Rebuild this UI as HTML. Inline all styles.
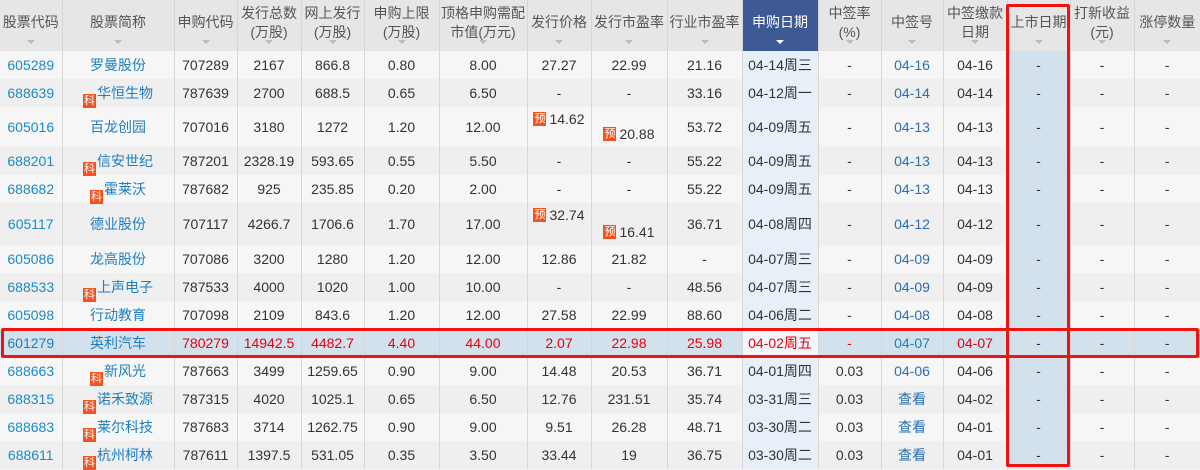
<!DOCTYPE html>
<html><head><meta charset="utf-8"><style>
body{margin:0;width:1200px;height:469px;overflow:hidden;background:#f5f5f5;font-family:"Liberation Sans","Noto Sans CJK SC",sans-serif;font-size:14px;color:#333;position:relative}
table{border-collapse:collapse;table-layout:fixed;width:1200px}
td,th{padding:0;text-align:center;border-left:1px solid #d6d6d6;white-space:nowrap;overflow:visible;line-height:16px}
th{background:#e6e6e6;font-weight:normal;color:#555;height:51px;line-height:19px;position:relative;vertical-align:middle;padding-bottom:6px;box-sizing:border-box}
th:after{content:"";position:absolute;left:50%;margin-left:-4px;bottom:7px;border:4px solid transparent;border-top:4px solid #bbb;border-bottom:0}
th.s{background:#3d5a95;color:#fff}
th.s:after{border-top-color:#fff}
tr{height:28px}
tr.odd td{background:#f6f6f6}
tr.even td{background:#efefef}
td.c{color:#1a8bc6}
td.n{color:#1c7fc1}
td.b{color:#2a6fb5}
td.d{background:#e7f0f9!important}
td.m{background:#d3e1ec!important}
tr.hl td{background:#d3e1ec!important;color:#e8000c}
tr.hl td.c,tr.hl td.n,tr.hl td.b{color:#1c7fc1}
.k{display:inline-block;width:13px;height:14px;line-height:14px;background:#f2531c;color:#fff;font-size:11px;vertical-align:middle;position:relative;top:7px;margin-right:1px}
.y{display:inline-block;width:13px;height:14px;line-height:14px;background:#f2531c;color:#fff;font-size:11px;margin-right:3px;vertical-align:middle;position:relative;top:-1px}
.box{position:absolute;border:3px solid #f0120f;box-sizing:border-box;border-radius:2px}
</style></head><body>
<table>
<colgroup><col style="width:62px"><col style="width:112px"><col style="width:63px"><col style="width:64px"><col style="width:63px"><col style="width:75px"><col style="width:88px"><col style="width:64px"><col style="width:76px"><col style="width:75px"><col style="width:76px"><col style="width:63px"><col style="width:62px"><col style="width:64px"><col style="width:63px"><col style="width:64px"><col style="width:66px"></colgroup>
<tr><th style="border-left:0">股票代码</th><th>股票简称</th><th>申购代码</th><th>发行总数<br>(万股)</th><th>网上发行<br>(万股)</th><th>申购上限<br>(万股)</th><th>顶格申购需配<br>市值(万元)</th><th>发行价格</th><th>发行市盈率</th><th>行业市盈率</th><th class="s">申购日期</th><th>中签率<br>(%)</th><th>中签号</th><th>中签缴款<br>日期</th><th>上市日期</th><th>打新收益<br>(元)</th><th>涨停数量</th></tr>
<tr class="odd"><td class="c" style="border-left:0">605289</td><td class="n">罗曼股份</td><td>707289</td><td>2167</td><td>866.8</td><td>0.80</td><td>8.00</td><td>27.27</td><td>22.99</td><td>21.16</td><td class="d">04-14周三</td><td>-</td><td class="b">04-16</td><td>04-16</td><td class="m">-</td><td>-</td><td>-</td></tr>
<tr class="even"><td class="c" style="border-left:0">688639</td><td class="n"><span class="k">科</span>华恒生物</td><td>787639</td><td>2700</td><td>688.5</td><td>0.65</td><td>6.50</td><td>-</td><td>-</td><td>33.16</td><td class="d">04-12周一</td><td>-</td><td class="b">04-14</td><td>04-14</td><td class="m">-</td><td>-</td><td>-</td></tr>
<tr class="odd" style="height:40px"><td class="c" style="border-left:0">605016</td><td class="n">百龙创园</td><td>707016</td><td>3180</td><td>1272</td><td>1.20</td><td>12.00</td><td style="vertical-align:top;padding-top:4px"><span class="y">预</span>14.62</td><td style="vertical-align:bottom;padding-bottom:5px"><span class="y">预</span>20.88</td><td>53.72</td><td class="d">04-09周五</td><td>-</td><td class="b">04-13</td><td>04-13</td><td class="m">-</td><td>-</td><td>-</td></tr>
<tr class="even"><td class="c" style="border-left:0">688201</td><td class="n"><span class="k">科</span>信安世纪</td><td>787201</td><td>2328.19</td><td>593.65</td><td>0.55</td><td>5.50</td><td>-</td><td>-</td><td>55.22</td><td class="d">04-09周五</td><td>-</td><td class="b">04-13</td><td>04-13</td><td class="m">-</td><td>-</td><td>-</td></tr>
<tr class="odd"><td class="c" style="border-left:0">688682</td><td class="n"><span class="k">科</span>霍莱沃</td><td>787682</td><td>925</td><td>235.85</td><td>0.20</td><td>2.00</td><td>-</td><td>-</td><td>55.22</td><td class="d">04-09周五</td><td>-</td><td class="b">04-13</td><td>04-13</td><td class="m">-</td><td>-</td><td>-</td></tr>
<tr class="even" style="height:42px"><td class="c" style="border-left:0">605117</td><td class="n">德业股份</td><td>707117</td><td>4266.7</td><td>1706.6</td><td>1.70</td><td>17.00</td><td style="vertical-align:top;padding-top:4px"><span class="y">预</span>32.74</td><td style="vertical-align:bottom;padding-bottom:5px"><span class="y">预</span>16.41</td><td>36.71</td><td class="d">04-08周四</td><td>-</td><td class="b">04-12</td><td>04-12</td><td class="m">-</td><td>-</td><td>-</td></tr>
<tr class="odd"><td class="c" style="border-left:0">605086</td><td class="n">龙高股份</td><td>707086</td><td>3200</td><td>1280</td><td>1.20</td><td>12.00</td><td>12.86</td><td>21.82</td><td>-</td><td class="d">04-07周三</td><td>-</td><td class="b">04-09</td><td>04-09</td><td class="m">-</td><td>-</td><td>-</td></tr>
<tr class="even"><td class="c" style="border-left:0">688533</td><td class="n"><span class="k">科</span>上声电子</td><td>787533</td><td>4000</td><td>1020</td><td>1.00</td><td>10.00</td><td>-</td><td>-</td><td>48.56</td><td class="d">04-07周三</td><td>-</td><td class="b">04-09</td><td>04-09</td><td class="m">-</td><td>-</td><td>-</td></tr>
<tr class="odd"><td class="c" style="border-left:0">605098</td><td class="n">行动教育</td><td>707098</td><td>2109</td><td>843.6</td><td>1.20</td><td>12.00</td><td>27.58</td><td>22.99</td><td>88.60</td><td class="d">04-06周二</td><td>-</td><td class="b">04-08</td><td>04-08</td><td class="m">-</td><td>-</td><td>-</td></tr>
<tr class="hl"><td class="c" style="border-left:0">601279</td><td class="n">英利汽车</td><td>780279</td><td>14942.5</td><td>4482.7</td><td>4.40</td><td>44.00</td><td>2.07</td><td>22.98</td><td>25.98</td><td class="d" style="background:#f2f6fa!important">04-02周五</td><td>-</td><td class="b">04-07</td><td>04-07</td><td class="m" style="color:#333">-</td><td style="color:#333">-</td><td style="color:#333">-</td></tr>
<tr class="odd"><td class="c" style="border-left:0">688663</td><td class="n"><span class="k">科</span>新风光</td><td>787663</td><td>3499</td><td>1259.65</td><td>0.90</td><td>9.00</td><td>14.48</td><td>20.53</td><td>36.71</td><td class="d">04-01周四</td><td>0.03</td><td class="b">04-06</td><td>04-06</td><td class="m">-</td><td>-</td><td>-</td></tr>
<tr class="even"><td class="c" style="border-left:0">688315</td><td class="n"><span class="k">科</span>诺禾致源</td><td>787315</td><td>4020</td><td>1025.1</td><td>0.65</td><td>6.50</td><td>12.76</td><td>231.51</td><td>35.74</td><td class="d">03-31周三</td><td>0.03</td><td class="b">查看</td><td>04-02</td><td class="m">-</td><td>-</td><td>-</td></tr>
<tr class="odd"><td class="c" style="border-left:0">688683</td><td class="n"><span class="k">科</span>莱尔科技</td><td>787683</td><td>3714</td><td>1262.75</td><td>0.90</td><td>9.00</td><td>9.51</td><td>26.28</td><td>48.71</td><td class="d">03-30周二</td><td>0.03</td><td class="b">查看</td><td>04-01</td><td class="m">-</td><td>-</td><td>-</td></tr>
<tr class="even"><td class="c" style="border-left:0">688611</td><td class="n"><span class="k">科</span>杭州柯林</td><td>787611</td><td>1397.5</td><td>531.05</td><td>0.35</td><td>3.50</td><td>33.44</td><td>19</td><td>36.75</td><td class="d">03-30周二</td><td>0.03</td><td class="b">查看</td><td>04-01</td><td class="m">-</td><td>-</td><td>-</td></tr>
</table>
<div class="box" style="left:1006px;top:4px;width:64px;height:463px"></div>
<div class="box" style="left:1px;top:328px;width:1198px;height:30px"></div>
</body></html>
